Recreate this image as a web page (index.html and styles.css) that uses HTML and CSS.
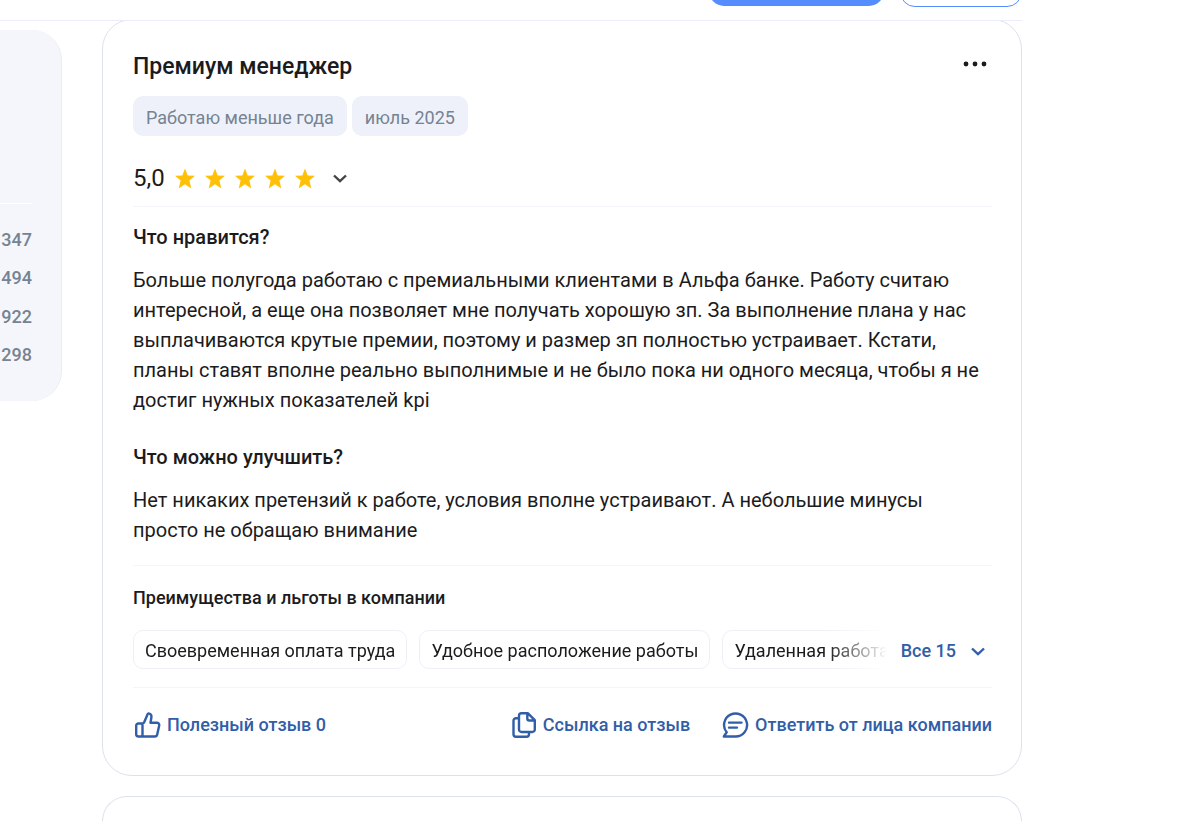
FILE: index.html
```
<!DOCTYPE html>
<html lang="ru">
<head>
  <meta charset="UTF-8">
  <meta name="viewport" content="width=device-width, initial-scale=1.0">
  <title>Отзывы о работе</title>
  <link rel="stylesheet" href="styles.css">
</head>
<body>
  <header class="topbar">
    <button class="topbar-btn topbar-btn-main" type="button" aria-label="Оставить отзыв"></button>
    <button class="topbar-btn topbar-btn-outline" type="button" aria-label="Подписаться"></button>
  </header>
  <div class="page">
    <aside class="sidebar">
      <ul class="counts">
        <li>347</li>
        <li>494</li>
        <li>922</li>
        <li>298</li>
      </ul>
    </aside>
    <main class="reviews">
      <article class="card">
        <div class="card-head">
          <h2>Премиум менеджер</h2>
          <button class="more" type="button" aria-label="Ещё">
            <svg width="24" height="6" viewBox="0 0 24 6" fill="currentColor"><circle cx="3" cy="3" r="2.4"/><circle cx="12" cy="3" r="2.4"/><circle cx="21" cy="3" r="2.4"/></svg>
          </button>
        </div>
        <div class="tags">
          <span class="tag">Работаю меньше года</span>
          <span class="tag">июль 2025</span>
        </div>
        <div class="rating">
          <span class="score">5,0</span>
          <svg class="stars" width="140" height="22" viewBox="0 0 140 22">
            <defs><path id="star" d="M10 1.500l2.700 6.900 7.300.4-5.600 4.700 1.900 8L10 17.200l-6.300 4.300 1.900-8L0 8.800l7.300-.4z"/></defs>
            <use href="#star"/><use href="#star" x="30"/><use href="#star" x="60"/><use href="#star" x="90"/><use href="#star" x="120"/>
          </svg>
          <button class="rating-toggle" type="button" aria-label="Показать оценки">
            <svg width="14" height="10" viewBox="0 0 14 10"><path d="M1 2.500l6 5.700 6-5.700"/></svg>
          </button>
        </div>
        <section class="answer">
          <h3>Что нравится?</h3>
          <p>Больше полугода работаю с премиальными клиентами в Альфа банке. Работу считаю интересной, а еще она позволяет мне получать хорошую зп. За выполнение плана у нас выплачиваются крутые премии, поэтому и размер зп полностью устраивает. Кстати, планы ставят вполне реально выполнимые и не было пока ни одного месяца, чтобы я не достиг нужных показателей kpi</p>
        </section>
        <section class="answer">
          <h3>Что можно улучшить?</h3>
          <p>Нет никаких претензий к работе, условия вполне устраивают. А небольшие минусы просто не обращаю внимание</p>
        </section>
        <section class="benefits">
          <h4>Преимущества и льготы в компании</h4>
          <div class="benefits-row">
            <ul class="chips">
              <li>Своевременная оплата труда</li>
              <li>Удобное расположение работы</li>
              <li>Удаленная работа</li>
            </ul>
            <button class="all" type="button">Все 15
              <svg width="14" height="10" viewBox="0 0 14 10"><path d="M1 2.500l6 5.700 6-5.700"/></svg>
            </button>
          </div>
        </section>
        <footer class="actions">
          <button class="action useful" type="button">
            <svg width="28" height="28" viewBox="0 0 28 28"><path d="M9.500 12.500v13M9.500 12.500H5.400A2.200 2.200 0 0 0 3.200 14.700v8.600a2.200 2.200 0 0 0 2.200 2.200h16.400a2.500 2.500 0 0 0 2.400-2l2-9a2.300 2.300 0 0 0-2.300-2.800H17.500l.9-5.400c.3-1.800-.5-3.200-2.100-3.800-.7-.3-1.400 0-1.700.8l-3.300 7.600c-.4.900-1 1.600-1.800 1.600z"/></svg>
            Полезный отзыв 0
          </button>
          <button class="action" type="button">
            <svg width="26" height="28" viewBox="0 0 26 28"><path d="M10.500 2.300H17l6.800 6.800v9.400a2.500 2.500 0 0 1-2.500 2.500h-10.800A2.500 2.500 0 0 1 8 18.500V4.800a2.500 2.500 0 0 1 2.500-2.500zM16.300 2.500v5a2 2 0 0 0 2 2h5.300M8 7.200H5A2.500 2.500 0 0 0 2.500 9.700v13.500A2.500 2.500 0 0 0 5 25.700h10.500a2.500 2.500 0 0 0 2.500-2.500V21"/></svg>
            Ссылка на отзыв
          </button>
          <button class="action" type="button">
            <svg width="28" height="28" viewBox="0 0 28 28"><path d="M2.800 25.500l2.900-4.200A11.500 11.500 0 1 1 14.500 25.500zM8 11.600h12.500M8 16.600h8"/></svg>
            Ответить от лица компании
          </button>
        </footer>
      </article>
      <article class="card card-next"></article>
    </main>
  </div>
</body>
</html>
```
FILE: styles.css
```
* { box-sizing: border-box; }
body { margin: 0; background: #fff; color: #1b1b1d; font-family: Roboto, sans-serif; font-size: 20px; line-height: 30px; }
h2, h3, h4, p, ul { margin: 0; padding: 0; font-weight: 500; }
ul { list-style: none; }
button { padding: 0; border: none; background: none; font: inherit; color: inherit; cursor: pointer; }
svg { display: block; flex-shrink: 0; }

.topbar { position: relative; z-index: 1; display: flex; justify-content: flex-end; align-items: flex-end; gap: 16px; height: 21px; margin-right: 172px; padding-bottom: 13px; background: #fff; border-bottom: 1px solid #e9eefa; }
.topbar-btn { height: 44px; border-radius: 15px; }
.topbar-btn-main { width: 175px; background: #558dff; margin-bottom: 1px; }
.topbar-btn-outline { width: 122px; border: 1px solid #558dff; }

.page { display: flex; align-items: flex-start; gap: 40px; margin-right: 172px; }
.sidebar { flex: 0 0 62px; margin-top: 9px; padding: 173px 29px 34px 0; background: #f4f6fc; border-right: 1px solid #ebedf2; border-radius: 0 30px 30px 0; }
.counts { display: flex; flex-direction: column; justify-content: space-between; height: 164px; padding-top: 24px; border-top: 1px solid #fff; color: #758392; font-size: 18px; line-height: 24px; font-weight: 500; text-align: right; }
.reviews { flex: 1; min-width: 0; margin-top: -2px; }
.card { padding: 31px 29px 35px 30px; border: 1px solid #dce2ec; border-radius: 30px; background: #fff; }
.card-next { min-height: 25px; margin-top: 20px; padding: 0; border-bottom: none; border-radius: 30px 30px 0 0; }

.card-head { display: flex; justify-content: space-between; align-items: flex-start; }
.card-head h2 { font-size: 23px; line-height: 32px; }
.more { padding: 10px 5px; }
.tags { display: flex; gap: 5px; margin-top: 13px; }
.tag { padding: 7px 13px 3px; background: #eef1f9; border-radius: 10px; color: #758392; font-size: 18px; }
.rating { display: flex; align-items: center; margin-top: 27px; padding-bottom: 13px; border-bottom: 1px solid #f3f5fb; }
.score { font-size: 24px; line-height: 30px; margin-right: 10px; }
.stars { fill: #ffc107; }
.rating-toggle { margin-left: 18px; color: #444; }
.rating-toggle path, .all path { fill: none; stroke: currentColor; stroke-width: 2.4; }

.answer { padding-bottom: 12px; }
.answer h3 { margin-bottom: 13px; font-size: 20px; line-height: 30px; }
.answer p { font-weight: 400; }
.rating + .answer { padding-top: 15px; padding-bottom: 27px; }
.benefits { margin-top: 8px; padding: 20px 0 18px; border-top: 1px solid #f3f5fb; border-bottom: 1px solid #f3f5fb; }
.benefits h4 { font-size: 18px; line-height: 24px; }
.benefits-row { display: flex; align-items: center; gap: 14px; margin-top: 20px; }
.chips { display: flex; flex: 1; min-width: 0; gap: 12px; overflow: hidden; -webkit-mask-image: linear-gradient(to left, transparent, #000 60px); mask-image: linear-gradient(to left, transparent, #000 60px); }
.chips li { flex-shrink: 0; padding: 6px 11px 3px; border: 1px solid #eeeff8; border-radius: 10px; font-size: 18px; line-height: 28px; font-weight: 400; white-space: nowrap; }
.all { display: flex; align-items: center; gap: 15px; padding: 2px 7px 0 0; color: #315ea8; font-size: 18px; font-weight: 500; }
.actions { display: flex; align-items: center; gap: 31px; padding-top: 22px; }
.action { display: flex; align-items: center; gap: 6px; color: #315ea8; font-size: 18px; font-weight: 500; white-space: nowrap; }
.action path { fill: none; stroke: currentColor; stroke-width: 2.4; stroke-linecap: round; stroke-linejoin: round; }
.useful { margin-right: auto; }
```
